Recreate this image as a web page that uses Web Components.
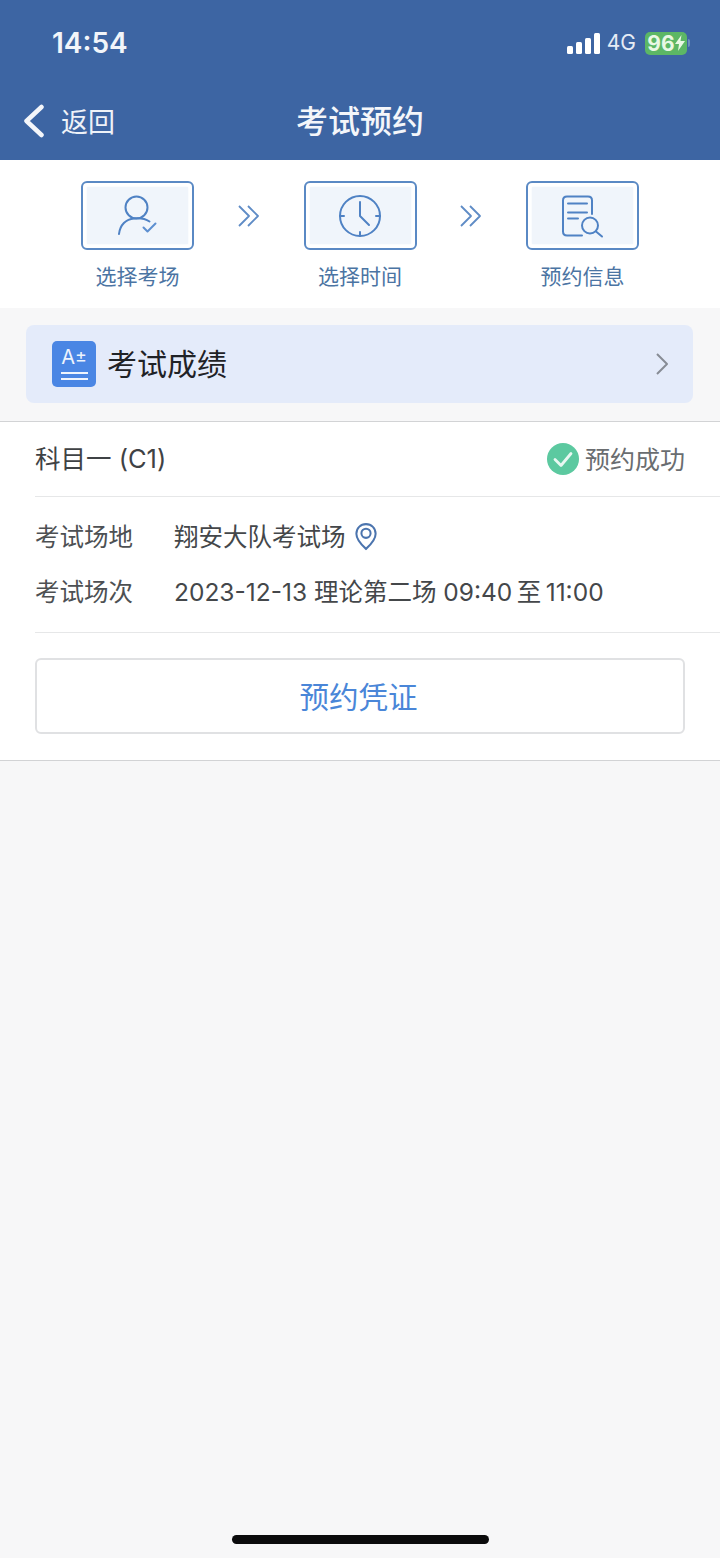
<!DOCTYPE html>
<html lang="zh">
<head>
<meta charset="utf-8">
<title>考试预约</title>
<style>
    html, body { margin: 0; padding: 0; background: #f7f7f8; }
    body {
        width: 720px;
        height: 1558px;
        overflow: hidden;
        font-family: "Inter", "Noto Sans CJK SC", sans-serif;
        display: flex;
        flex-direction: column;
    }
</style>
</head>
<body>
<app-header title="考试预约" back="返回" time="14:54"></app-header>

<step-bar>
    <step-item label="选择考场">
        <svg viewBox="0 0 44 44" width="44" height="44" fill="none" stroke="#4f82c4" stroke-width="2" stroke-linecap="round" stroke-linejoin="round">
            <circle cx="20.500" cy="13.500" r="11"/>
            <path d="M3 40c1-9 7-15 15-15.500 5-.5 11 0 15.500 3"/>
            <path d="M27.500 33.500l4 4 8-8" stroke="#5d8fd0"/>
        </svg>
    </step-item>
    <step-arrow></step-arrow>
    <step-item label="选择时间">
        <svg viewBox="0 0 44 44" width="44" height="44" fill="none" stroke="#4f82c4" stroke-width="2" stroke-linecap="round" stroke-linejoin="round">
            <circle cx="22" cy="22" r="20"/>
            <path d="M22 8v14l9 9"/>
            <path d="M2 22h4M38 22h4M22 38v4"/>
        </svg>
    </step-item>
    <step-arrow></step-arrow>
    <step-item label="预约信息">
        <svg viewBox="0 0 44 44" width="44" height="44" fill="none" stroke="#4f82c4" stroke-width="2" stroke-linecap="round" stroke-linejoin="round">
            <path d="M31 20V6.500c0-2.500-1.500-4-4-4H6c-2.500 0-4 1.500-4 4v31c0 2.500 1.500 4 4 4h15"/>
            <path d="M7 9.500h19M7 18.500h19M7 24.500h10"/>
            <circle cx="29" cy="31.500" r="8"/>
            <path d="M35 37.500l6 5"/>
        </svg>
    </step-item>
</step-bar>

<score-link label="考试成绩"></score-link>

<exam-card subject="科目一 (C1)" status="预约成功" button="预约凭证">
    <info-row label="考试场地">翔安大队考试场<pin-icon></pin-icon></info-row>
    <info-row label="考试场次">2023-12-13 理论第二场 09:40&thinsp;至&thinsp;11:00</info-row>
</exam-card>

<home-bar></home-bar>

<script>
    class AppHeader extends HTMLElement {
        constructor() {
            super();
            this.attachShadow({ mode: "open" });
            const title = this.getAttribute("title");
            const back = this.getAttribute("back");
            const time = this.getAttribute("time");
            this.shadowRoot.innerHTML = `
                <style>
                    :host {
                        display: block;
                        background: #3d65a3;
                        color: #fff;
                        flex: none;
                        height: 160px;
                    }
                    .status {
                        height: 84px;
                        display: flex;
                        align-items: flex-start;
                        justify-content: space-between;
                        padding: 26px 30px 0 52px;
                        box-sizing: border-box;
                    }
                    .time {
                        font: 600 28px/34px "Inter", sans-serif;
                        color: #f2f5fa;
                    }
                    .right {
                        display: flex;
                        align-items: center;
                        height: 34px;
                        gap: 7px;
                    }
                    .net { font: 400 21px/24px "Inter", sans-serif; color: #e6ecf5; margin-right: 2px; }
                    .battery {
                        width: 42px;
                        height: 23px;
                        border-radius: 5px;
                        background: #5cb765;
                        color: #e9f8e4;
                        font: 700 21px/23px "Inter", sans-serif;
                        display: flex;
                        align-items: center;
                        justify-content: center;
                    }
                    .nub { width: 2px; height: 8px; background: #6f8fbd; border-radius: 0 2px 2px 0; margin-left: -6px; }
                    .nav {
                        position: relative;
                        height: 76px;
                        display: flex;
                        align-items: center;
                        justify-content: center;
                    }
                    .back {
                        position: absolute;
                        left: 23px;
                        top: 20px;
                        display: flex;
                        align-items: center;
                        gap: 16px;
                        font: 400 27px/34px "Noto Sans CJK SC", sans-serif;
                        color: #eef2f8;
                    }
                    h1 {
                        margin: 0 0 6px;
                        font: 500 32px/40px "Noto Sans CJK SC", sans-serif;
                        color: #f4f6fa;
                    }
                </style>
                <div class="status">
                    <span class="time">${time}</span>
                    <div class="right">
                        <svg width="33" height="21" viewBox="0 0 33 21" fill="#fff">
                            <rect x="0" y="13" width="6" height="8" rx="1.500"/>
                            <rect x="9" y="9" width="6" height="12" rx="1.500"/>
                            <rect x="18" y="5" width="6" height="16" rx="1.500"/>
                            <rect x="27" y="0" width="6" height="21" rx="1.500"/>
                        </svg>
                        <span class="net">4G</span>
                        <span class="battery">96<svg width="10" height="16" viewBox="0 0 10 16" fill="#e9f8e4"><path d="M6.500 0L0 9h4l-1 7 7-10H5.500z"/></svg></span>
                        <span class="nub"></span>
                    </div>
                </div>
                <div class="nav">
                    <div class="back">
                        <svg width="22" height="34" viewBox="0 0 22 34" fill="none" stroke="#f4f6fa" stroke-width="4.500" stroke-linecap="round" stroke-linejoin="round"><path d="M18.500 3L3.500 17l15 14"/></svg>
                        <span>${back}</span>
                    </div>
                    <h1>${title}</h1>
                </div>
            `;
        }
    }

    class StepBar extends HTMLElement {
        constructor() {
            super();
            this.attachShadow({ mode: "open" });
            this.shadowRoot.innerHTML = `
                <style>
                    :host {
                        display: flex;
                        flex: none;
                        height: 148px;
                        box-sizing: border-box;
                        background: #fff;
                        padding: 21px 0 0 81px;
                        align-items: flex-start;
                    }
                </style>
                <slot></slot>
            `;
        }
    }

    class StepItem extends HTMLElement {
        constructor() {
            super();
            this.attachShadow({ mode: "open" });
            const label = this.getAttribute("label");
            this.shadowRoot.innerHTML = `
                <style>
                    :host {
                        display: flex;
                        flex-direction: column;
                        align-items: center;
                        width: 113px;
                    }
                    .box {
                        width: 113px;
                        height: 69px;
                        box-sizing: border-box;
                        border: 2px solid #5a89c4;
                        border-radius: 6px;
                        padding: 4px;
                        background: #fff;
                    }
                    .inner {
                        height: 100%;
                        background: #f0f5fb;
                        box-shadow: 0 0 2px #f0f5fb;
                        display: flex;
                        align-items: center;
                        justify-content: center;
                    }
                    .label {
                        margin-top: 11px;
                        font: 400 21px/28px "Noto Sans CJK SC", sans-serif;
                        color: #4b74a3;
                    }
                </style>
                <div class="box"><div class="inner"><slot></slot></div></div>
                <div class="label">${label}</div>
            `;
        }
    }

    class StepArrow extends HTMLElement {
        constructor() {
            super();
            this.attachShadow({ mode: "open" });
            this.shadowRoot.innerHTML = `
                <style>
                    :host {
                        display: flex;
                        justify-content: center;
                        width: 109.500px;
                        padding-top: 23px;
                    }
                </style>
                <svg width="24" height="24" viewBox="0 0 24 24" fill="none" stroke="#5f8cc6" stroke-width="1.800" stroke-linejoin="round">
                    <path d="M2 2l10 10L2 22M11 2l10 10-10 10"/>
                </svg>
            `;
        }
    }

    class ScoreLink extends HTMLElement {
        constructor() {
            super();
            this.attachShadow({ mode: "open" });
            const label = this.getAttribute("label");
            this.shadowRoot.innerHTML = `
                <style>
                    :host {
                        display: block;
                        flex: none;
                        background: #f7f7f8;
                        padding: 17px 27px 18px 26px;
                    }
                    .card {
                        height: 78px;
                        border-radius: 8px;
                        background: #e4ebfa;
                        display: flex;
                        align-items: center;
                        padding: 0 24px 0 26px;
                        gap: 12px;
                    }
                    .label {
                        flex: 1;
                        margin: 0 0 4px -1px;
                        font: 400 30px/40px "Noto Sans CJK SC", sans-serif;
                        color: #1f2226;
                    }
                    .badge {
                        width: 44px;
                        height: 46px;
                        border-radius: 5px;
                        background: #4a86e4;
                        display: flex;
                        flex-direction: column;
                        align-items: center;
                        color: #eef4fd;
                        box-sizing: border-box;
                        padding: 6px 0 0;
                    }
                    .grade { font: 400 20px/20px "Inter", sans-serif; height: 20px; display: flex; }
                    .grade span { font-size: 18px; line-height: 18px; }
                    .bar { width: 27px; height: 2px; background: #eef4fd; margin-top: 4px; }
                    .grade + .bar { margin-top: 5px; }
                </style>
                <div class="card">
                    <div class="badge">
                        <div class="grade">A<span>±</span></div>
                        <i class="bar"></i>
                        <i class="bar"></i>
                    </div>
                    <span class="label">${label}</span>
                    <svg width="14" height="24" viewBox="0 0 14 24" fill="none" stroke="#878c95" stroke-width="2" stroke-linejoin="round"><path d="M2 2l10 10L2 22"/></svg>
                </div>
            `;
        }
    }

    class ExamCard extends HTMLElement {
        constructor() {
            super();
            this.attachShadow({ mode: "open" });
            const subject = this.getAttribute("subject");
            const status = this.getAttribute("status");
            const button = this.getAttribute("button");
            this.shadowRoot.innerHTML = `
                <style>
                    :host {
                        display: block;
                        flex: none;
                        background: #fff;
                        border-top: 1px solid #d2d3d5;
                        border-bottom: 1px solid #d2d3d5;
                        height: 339.500px;
                        box-sizing: border-box;
                    }
                    .head {
                        height: 74px;
                        margin-left: 35px;
                        padding-right: 35px;
                        display: flex;
                        align-items: center;
                        justify-content: space-between;
                        border-bottom: 1px solid #e6e7e8;
                    }
                    .subject {
                        font: 400 25.500px/34px "Inter", "Noto Sans CJK SC", sans-serif;
                        color: #3f4245;
                    }
                    .status {
                        display: flex;
                        align-items: center;
                        gap: 6px;
                        font: 400 25px/32px "Noto Sans CJK SC", sans-serif;
                        color: #6a6d70;
                    }
                    .status span { margin-bottom: 2px; }
                    .rows {
                        height: 136px;
                        box-sizing: border-box;
                        margin-left: 35px;
                        padding-top: 12px;
                        border-bottom: 1px solid #e6e7e8;
                    }
                    .foot { padding: 25px 35px 0; }
                    .btn {
                        height: 76px;
                        box-sizing: border-box;
                        border: 2px solid #e0e1e3;
                        border-radius: 6px;
                        padding: 0 3px 3px 0;
                        display: flex;
                        align-items: center;
                        justify-content: center;
                        font: 400 29.500px/40px "Noto Sans CJK SC", sans-serif;
                        color: #4a86d8;
                    }
                </style>
                <div class="head">
                    <span class="subject">${subject}</span>
                    <span class="status">
                        <svg width="32" height="32" viewBox="0 0 32 32"><circle cx="16" cy="16" r="16" fill="#5cc9a0"/><path d="M8 16.500l6 6L24 10.500" fill="none" stroke="#e9f8f2" stroke-width="2.800" stroke-linecap="round" stroke-linejoin="round"/></svg>
                        <span>${status}</span>
                    </span>
                </div>
                <div class="rows"><slot></slot></div>
                <div class="foot"><div class="btn">${button}</div></div>
            `;
        }
    }

    class InfoRow extends HTMLElement {
        constructor() {
            super();
            this.attachShadow({ mode: "open" });
            const label = this.getAttribute("label");
            this.shadowRoot.innerHTML = `
                <style>
                    :host {
                        display: flex;
                        align-items: center;
                        height: 55px;
                        font: 400 24.500px/34px "Inter", "Noto Sans CJK SC", sans-serif;
                        color: #44474a;
                    }
                    .label { width: 139px; flex: none; color: #4d5053; }
                    .value { display: flex; align-items: center; white-space: pre; }
                </style>
                <span class="label">${label}</span>
                <span class="value"><slot></slot></span>
            `;
        }
    }

    class PinIcon extends HTMLElement {
        constructor() {
            super();
            this.attachShadow({ mode: "open" });
            this.shadowRoot.innerHTML = `
                <style>
                    :host { display: inline-flex; margin-left: 9px; }
                </style>
                <svg width="22" height="29" viewBox="0 0 24 30" fill="none" stroke="#4b74ae" stroke-width="2.200">
                    <path d="M12 1.500c6 0 10.500 4.500 10.500 10.500 0 6.500-6 12.500-10.500 16.500C7.500 24.500 1.500 18.500 1.500 12 1.500 6 6 1.500 12 1.500z"/>
                    <circle cx="12" cy="11.500" r="5"/>
                </svg>
            `;
        }
    }

    class HomeBar extends HTMLElement {
        constructor() {
            super();
            this.attachShadow({ mode: "open" });
            this.shadowRoot.innerHTML = `
                <style>
                    :host {
                        display: flex;
                        flex: 1;
                        justify-content: center;
                        align-items: flex-end;
                        padding-bottom: 14px;
                    }
                    i { display: block; width: 257px; height: 9px; border-radius: 5px; background: #0b0b0c; }
                </style>
                <i></i>
            `;
        }
    }

    customElements.define("app-header", AppHeader);
    customElements.define("step-bar", StepBar);
    customElements.define("step-item", StepItem);
    customElements.define("step-arrow", StepArrow);
    customElements.define("score-link", ScoreLink);
    customElements.define("exam-card", ExamCard);
    customElements.define("info-row", InfoRow);
    customElements.define("pin-icon", PinIcon);
    customElements.define("home-bar", HomeBar);
</script>
</body>
</html>
